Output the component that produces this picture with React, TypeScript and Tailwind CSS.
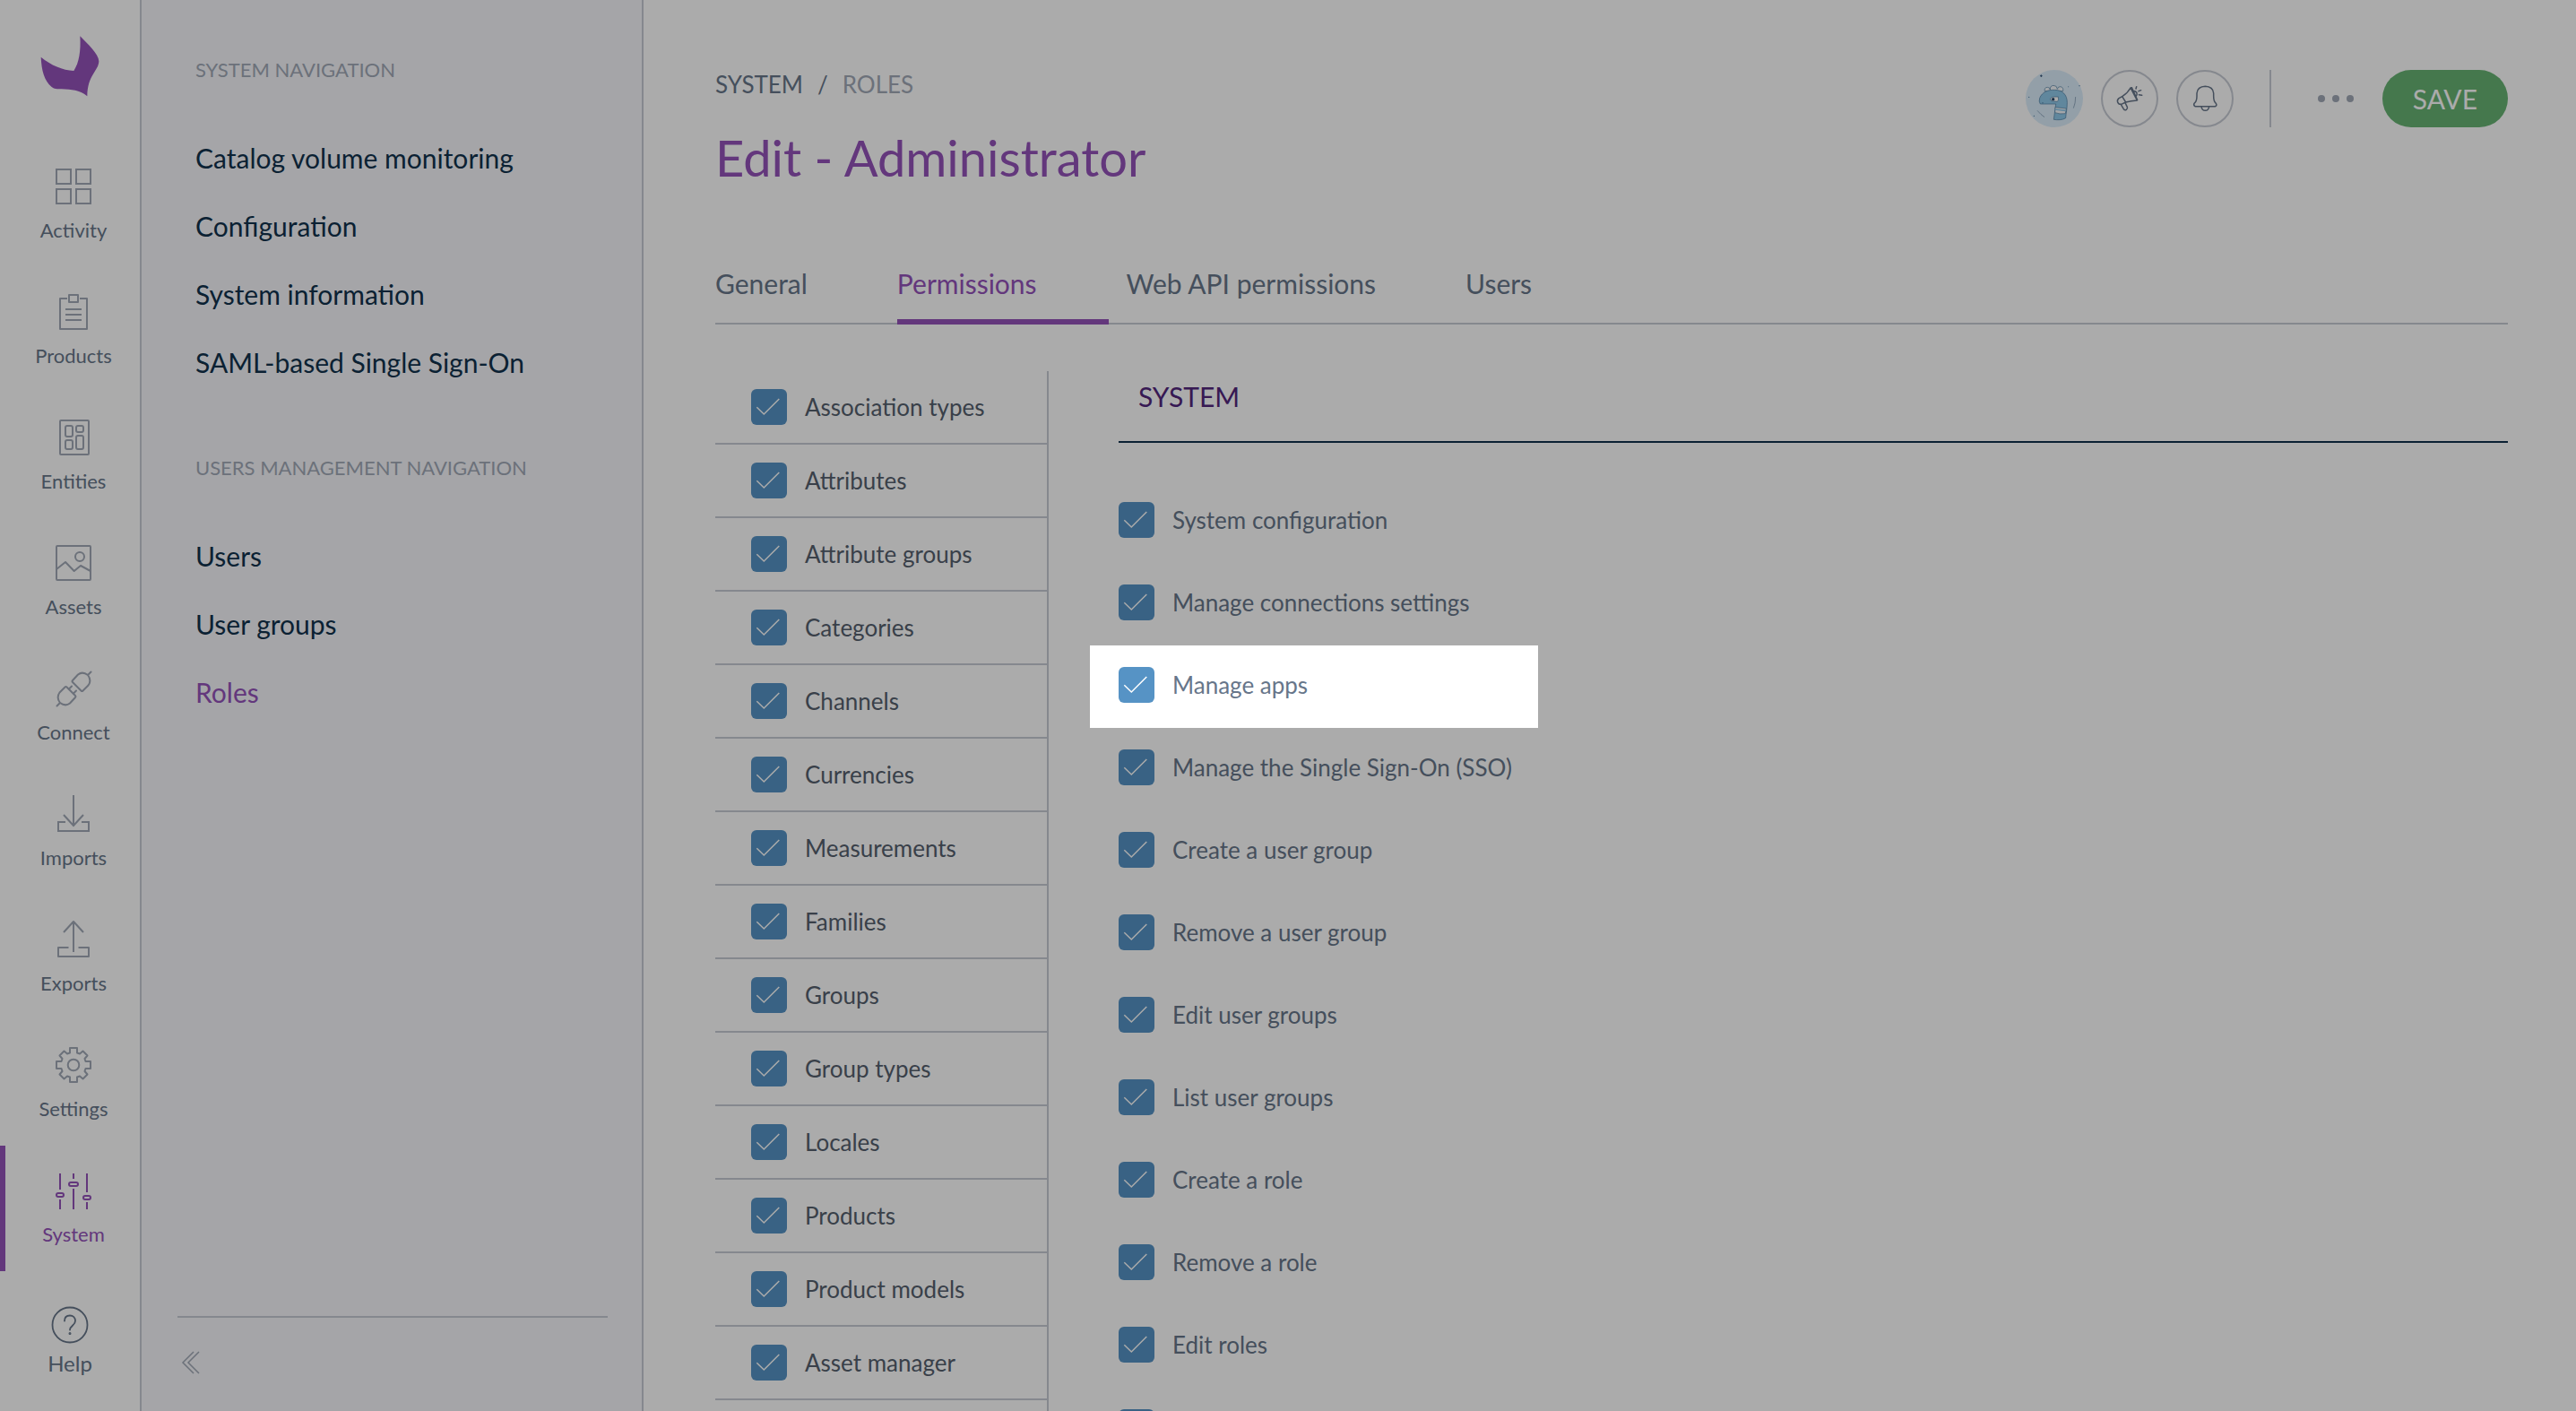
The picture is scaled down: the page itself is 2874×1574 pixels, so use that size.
import React from "react";

type IconProps = { children: React.ReactNode };

function RailIcon({ children }: IconProps) {
  return (
    <svg className="size-12" viewBox="0 0 48 48" fill="none" stroke="currentColor" strokeWidth="2" strokeLinejoin="round" aria-hidden="true">
      {children}
    </svg>
  );
}

const railItems = [
  {
    label: "Activity",
    icon: (
      <g strokeLinejoin="miter">
        <rect x="5" y="5" width="16" height="16" />
        <rect x="27" y="5" width="16" height="16" />
        <rect x="5" y="27" width="16" height="16" />
        <rect x="27" y="27" width="16" height="16" />
      </g>
    ),
  },
  {
    label: "Products",
    icon: (
      <g>
        <path d="M17 9H9v34h30V9h-8" />
        <rect x="19" y="5" width="10" height="8" />
        <path d="M15 21h18M15 27h18M15 33h18" />
      </g>
    ),
  },
  {
    label: "Entities",
    icon: (
      <g>
        <rect x="9" y="5" width="32" height="38" rx="1" />
        <rect x="15" y="11" width="8" height="12" rx="2" />
        <rect x="27" y="11" width="8" height="7" rx="2" />
        <rect x="15" y="27" width="8" height="10" rx="2" />
        <rect x="27" y="22" width="8" height="15" rx="2" />
      </g>
    ),
  },
  {
    label: "Assets",
    icon: (
      <g>
        <rect x="5" y="5" width="38" height="38" rx="1" />
        <circle cx="31" cy="17" r="5" />
        <path d="M5 31l10-8 9.700 10 7.300-6 11 6" />
      </g>
    ),
  },
  {
    label: "Connect",
    icon: (
      <g strokeLinecap="round">
        <path d="M23 15l6-6.500q5-4 11 .5 4.500 6 .5 11.500l-6 6q-1 1-2 0l-9.500-9.500q-1-1 0-2zM40 9l3.500-3.500" />
        <path d="M26 34l-6 6.500q-5 4-11-.5-4.500-6-.5-11.500l6-6q1-1 2 0l9.500 9.500q1 1 0 2zM9 40l-3.500 3.500" />
        <path d="M19 24.500l3-3M24 29.500l3-3" />
      </g>
    ),
  },
  {
    label: "Imports",
    icon: (
      <g strokeLinejoin="miter">
        <path d="M24 3v33.500M13 25l11 12 11-12" />
        <path d="M15 33H7v10h34V33h-8" />
      </g>
    ),
  },
  {
    label: "Exports",
    icon: (
      <g>
        <path d="M24 4v34M13 16L24 4l11 12" />
        <path d="M18.500 33H7v10h34V33H29.500" />
      </g>
    ),
  },
  {
    label: "Settings",
    icon: (
      <g>
        <path d="M20 5h8v5.500l3 1 3.500-3 5 5-3 3.500 1 3H43v8h-5.500l-1 3 3 3.500-5 5-3.500-3-3 1V43h-8v-5.500l-3-1-3.500 3-5-5 3-3.500-1-3H5v-8h5.500l1-3-3-3.500 5-5 3.500 3 3-1z" />
        <circle cx="24" cy="24" r="6.300" />
      </g>
    ),
  },
  {
    label: "System",
    active: true,
    icon: (
      <g>
        <path d="M9 5v18M9 34v11M24 5v6M24 22v23M39 5v21M39 37v8" />
        <rect x="5" y="27" width="8" height="4" rx="2" />
        <rect x="19" y="15" width="10" height="4" rx="2" />
        <rect x="35" y="30" width="8" height="4" rx="2" />
      </g>
    ),
  },
];

const navSections = [
  {
    title: "SYSTEM NAVIGATION",
    links: ["Catalog volume monitoring", "Configuration", "System information", "SAML-based Single Sign-On"],
  },
  { title: "USERS MANAGEMENT NAVIGATION", links: ["Users", "User groups", "Roles"] },
];

const tabs = ["General", "Permissions", "Web API permissions", "Users"];

const groups = [
  "Association types",
  "Attributes",
  "Attribute groups",
  "Categories",
  "Channels",
  "Currencies",
  "Measurements",
  "Families",
  "Groups",
  "Group types",
  "Locales",
  "Products",
  "Product models",
  "Asset manager",
];

const permissions = [
  "System configuration",
  "Manage connections settings",
  "Manage apps",
  "Manage the Single Sign-On (SSO)",
  "Create a user group",
  "Remove a user group",
  "Edit user groups",
  "List user groups",
  "Create a role",
  "Remove a role",
  "Edit roles",
];

function CheckboxBox({ label }: { label?: string }) {
  return (
    <span className="grid size-10 shrink-0">
      <input type="checkbox" defaultChecked aria-label={label} className="col-start-1 row-start-1 size-10 appearance-none rounded-md bg-[#5693c5]" />
      <svg className="pointer-events-none col-start-1 row-start-1 size-10" viewBox="0 0 40 40" fill="none" stroke="#fff" strokeWidth="1.500" aria-hidden="true">
        <path d="M6.300 20.300l8 7.700 17-17" />
      </svg>
    </span>
  );
}

function Checkbox({ label }: { label: string }) {
  return (
    <label className="flex items-center gap-5 text-[26px] leading-10">
      <CheckboxBox />
      {label}
    </label>
  );
}

function Logo() {
  return (
    <svg className="h-[68px] w-[70px]" viewBox="69 60 210 204" fill="#9452ba" role="img" aria-label="Akeneo">
      <path d="M208 61C232 86 270 120 271 145C270 178 233 190 232 262C205 240 180 240 146 238C132 237 120 238 112 230C88 210 79 175 77 131C110 158 150 175 187 177C205 150 211 110 208 61Z" />
    </svg>
  );
}

function Rail() {
  return (
    <nav aria-label="Main" className="flex w-[158px] shrink-0 flex-col border-r-2 border-[#c7cbd4] bg-white">
      <a href="#home" className="flex h-[158px] justify-center pt-10">
        <Logo />
      </a>
      {railItems.map((item) => (
        <a
          key={item.label}
          href={"#" + item.label.toLowerCase()}
          className={
            item.active
              ? "flex h-[140px] flex-col items-center gap-3 border-l-6 border-[#9452ba] pl-0.5 pt-[26px] text-[#9452ba]"
              : "flex h-[140px] flex-col items-center gap-3 pl-2 pt-[26px] text-[#a1a9b7]"
          }
        >
          <RailIcon>{item.icon}</RailIcon>
          <span className={item.active ? "text-[22px] leading-[26px]" : "text-[22px] leading-[26px] text-[#67768a]"}>{item.label}</span>
        </a>
      ))}
      <a href="#help" className="mt-auto flex flex-col items-center gap-2 pb-[39px] text-[24px] leading-7 text-[#67768a]">
        <svg className="size-[42px]" viewBox="0 0 42 42" fill="none" stroke="currentColor" strokeWidth="1.800" strokeLinecap="round" aria-hidden="true">
          <circle cx="21" cy="21" r="19.500" />
          <path d="M15 16.500C15 12.500 17.500 10.500 21 10.500s6 2.500 6 6c0 5-6 5.500-6 10" />
          <circle cx="21" cy="30.500" r="0.600" />
        </svg>
        Help
      </a>
    </nav>
  );
}

function SubNavigation() {
  return (
    <aside className="flex w-[560px] shrink-0 flex-col border-r-2 border-[#c7cbd4] bg-[#f6f7fb]">
      <nav aria-label="System" className="flex flex-col gap-[66px] px-[60px] pt-16">
        {navSections.map((section) => (
          <section key={section.title}>
            <h2 className="mb-[46px] text-[22px] leading-7 text-[#a1a9b7]">{section.title}</h2>
            {section.links.map((link) => (
              <a
                key={link}
                href={"#" + link.toLowerCase().replace(/ /g, "-")}
                className={link === "Roles" ? "block text-[30px] leading-[76px] text-[#9452ba]" : "block text-[30px] leading-[76px] text-[#11324d]"}
              >
                {link}
              </a>
            ))}
          </section>
        ))}
      </nav>
      <div className="mt-auto mr-[38px] ml-10 h-[106px] border-t-2 border-[#c7cbd4] pt-9">
        <button type="button" aria-label="Collapse" className="flex text-[#a1a9b7]">
          <svg className="h-7 w-7" viewBox="0 0 28 28" fill="none" stroke="currentColor" strokeWidth="1.500" aria-hidden="true">
            <path d="M18 2L6 14l12 12M24 2L12 14l12 12" />
          </svg>
        </button>
      </div>
    </aside>
  );
}

function Avatar() {
  return (
    <svg className="size-16" viewBox="30 24 192 192" role="img" aria-label="User">
      <circle cx="126" cy="120" r="96" fill="#dceefb" />
      <g stroke="#4c7ba0" strokeWidth="2" strokeLinejoin="round">
        <path d="M94 95q-3-12 9-13 8 0 9 8-1-13 11-14 12 0 13 12 2-9 11-8 10 2 8 15z" fill="#f4f8fc" />
        <path d="M79 138q-6-8-2-20c8-20 28-28 50-27 26 0 42 16 42 42 0 20-4 36-5 52-10 7-28 7-40 5l7-52z" fill="#8fc9ea" />
        <path d="M129 149l37 4-3 17q-20 3-35-3z" fill="#f4f8fc" />
        <path d="M128 156l36 4" stroke="#8fc9ea" strokeWidth="5" />
        <path d="M112 120q6-7 14-6h13q3 12-3 16l-20-2z" fill="#fff" />
      </g>
      <circle cx="122" cy="122" r="5" fill="#24466b" />
      <circle cx="87" cy="134" r="1.500" fill="#24466b" />
      <g stroke="#6f8ba6" strokeWidth="2" fill="none">
        <path d="M197 114q0 22-7 38M69 160q12 14 24 22" />
      </g>
      <path d="M82 40v8M78 44h8" stroke="#24466b" strokeWidth="2.500" />
      <g fill="#4c7ba0">
        <circle cx="210" cy="77" r="2" />
        <circle cx="173" cy="80" r="1.500" />
        <circle cx="41" cy="115" r="2" />
        <circle cx="58" cy="178" r="2" />
      </g>
    </svg>
  );
}

function HeaderActions() {
  return (
    <div className="flex h-16 items-center">
      <button type="button" aria-label="Account">
        <Avatar />
      </button>
      <button type="button" aria-label="Announcements" className="ml-5 size-16 rounded-full border-2 border-[#c7cbd4] text-[#67768a]">
        <svg className="size-[60px]" viewBox="288 30 180 180" fill="none" stroke="currentColor" strokeWidth="4.500" strokeLinejoin="round" strokeLinecap="round" aria-hidden="true">
          <path d="M381 84q-10 18-28 29l12 19q18-5 38-6zM381 84l4-1 19 42-4 2" />
          <path d="M353 113l-11 6q-7 6-4 13 3 8 12 7l15-7M349 140l9 15q4 5 9 2 5-3 3-9l-7-14" />
          <path d="M391 95q8-1 11 6 2 7-3 11M399 87l2-7M408 95l8-3M409 107l10 2" />
        </svg>
      </button>
      <button type="button" aria-label="Notifications" className="ml-5 size-16 rounded-full border-2 border-[#c7cbd4] text-[#67768a]">
        <svg className="size-[60px]" viewBox="540 30 180 180" fill="none" stroke="currentColor" strokeWidth="4.500" strokeLinejoin="round" strokeLinecap="round" aria-hidden="true">
          <path d="M597 146q-6-4-3-10 9-6 9-24v-10q2-22 28-23 26 1 28 23v10q0 18 8 24 4 6-2 10zM618 147q2 13 13 13t13-13" />
        </svg>
      </button>
      <div className="ml-10 h-16 w-0.5 bg-[#c7cbd4]" />
      <button type="button" aria-label="More actions" className="flex h-16 w-[124px] items-center justify-end gap-2 pr-8">
        <span className="size-2 rounded-full bg-[#a1a9b7]" />
        <span className="size-2 rounded-full bg-[#a1a9b7]" />
        <span className="size-2 rounded-full bg-[#a1a9b7]" />
      </button>
      <button type="button" className="h-16 rounded-full bg-[#67b373] px-[34px] text-[30px] leading-none text-white">
        SAVE
      </button>
    </div>
  );
}

export default function App() {
  return (
    <div className="flex h-screen overflow-hidden bg-white font-[Lato,sans-serif] text-[#67768a]">
      <Rail />
      <SubNavigation />
      <main className="min-w-0 flex-1 pt-[78px] pr-[76px] pl-20">
        <header className="flex items-start justify-between">
          <div>
            <nav aria-label="Breadcrumb" className="flex gap-4 text-[26px] leading-8">
              <a href="#system">SYSTEM</a>
              <span>/</span>
              <a href="#roles" className="text-[#a1a9b7]">
                ROLES
              </a>
            </nav>
            <h1 className="mt-8 text-[56px] leading-[68px] text-[#9452ba]">Edit - Administrator</h1>
          </div>
          <HeaderActions />
        </header>

        <div role="tablist" className="mt-[66px] flex h-[86px] gap-5 border-b-2 border-[#c7cbd4]">
          {tabs.map((tab) => (
            <button
              key={tab}
              type="button"
              role="tab"
              aria-selected={tab === "Permissions"}
              className={
                tab === "Permissions"
                  ? "h-[86px] border-b-6 border-[#9452ba] pr-20 text-[30px] text-[#9452ba]"
                  : "h-[86px] border-b-6 border-transparent pr-20 text-[30px]"
              }
            >
              {tab}
            </button>
          ))}
        </div>

        <div className="mt-[52px] flex">
          <ul className="h-screen w-[372px] shrink-0 border-r-2 border-[#c7cbd4] text-[#55606e]">
            {groups.map((group) => (
              <li key={group} className="flex h-[82px] items-center border-b-2 border-[#c7cbd4] pl-10">
                <Checkbox label={group} />
              </li>
            ))}
          </ul>
          <section className="ml-[78px] flex-1">
            <h2 className="mb-[42px] flex h-20 items-center border-b-2 border-[#11324d] pb-[22px] pl-[22px] text-[30px] text-[#52267d]">SYSTEM</h2>
            <ul>
              {permissions.map((permission) => (
                <li
                  key={permission}
                  className={
                    permission === "Manage apps"
                      ? "relative z-10 -ml-8 h-[92px] w-[500px] bg-white pt-6 pl-8 shadow-[0_0_0_4000px_rgba(0,0,0,0.33)]"
                      : "h-[92px] pt-6"
                  }
                >
                  <Checkbox label={permission} />
                </li>
              ))}
              <li className="h-[92px] pt-6">
                <CheckboxBox label="List roles" />
              </li>
            </ul>
          </section>
        </div>
      </main>
    </div>
  );
}
